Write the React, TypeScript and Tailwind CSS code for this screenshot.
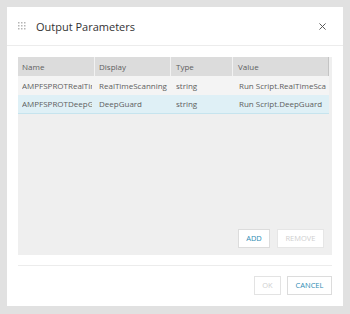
const rows = [
  { name: 'AMPFSPROTRealTimeScanning', display: 'RealTimeScanning', type: 'string', value: 'Run Script.RealTimeScanning', selected: false },
  { name: 'AMPFSPROTDeepGuard', display: 'DeepGuard', type: 'string', value: 'Run Script.DeepGuard', selected: true },
]

function GripIcon() {
  return (
    <svg width="8" height="8" viewBox="0 0 8 8" className="text-[#b5b5b5]">
      {[0, 3, 6].map((y) =>
        [0, 3, 6].map((x) => <rect key={`${x}-${y}`} x={x} y={y} width="1.5" height="1.5" fill="currentColor" />),
      )}
    </svg>
  )
}

export default function App() {
  return (
    <div className="h-[314px] w-[350px] bg-[#e1e1e1] p-[7px] font-['Open_Sans',sans-serif]">
      <div className="flex h-[299px] w-[336px] flex-col bg-white">
        <div className="flex h-[39px] shrink-0 items-center border-b border-[#ececec] pl-[11px] pr-[17px]">
          <GripIcon />
          <span className="ml-[10px] text-[11px] leading-none text-[#333]">Output Parameters</span>
          <svg width="7" height="7" viewBox="0 0 8 8" className="ml-auto">
            <path d="M0.5 0.5L7.5 7.5M7.5 0.5L0.5 7.5" stroke="#555" strokeWidth="1.1" />
          </svg>
        </div>

        <div className="px-[11px] pt-[11px]">
          <div className="flex h-[198px] flex-col bg-[#efefef] pr-[3px] text-[8px] text-[#5e5e5e]">
            <div className="flex h-[19px] bg-[#dcdcdc]">
              <div className="flex w-[77px] items-center border-r border-[#f2f2f2] pl-[4px]">Name</div>
              <div className="flex w-[76px] items-center border-r border-[#f2f2f2] pl-[4px]">Display</div>
              <div className="flex w-[62px] items-center border-r border-[#f2f2f2] pl-[5px]">Type</div>
              <div className="flex w-[96px] items-center border-r border-[#c4c4c4] pl-[5px]">Value</div>
            </div>
            {rows.map((r) => (
              <div
                key={r.name}
                className={
                  r.selected
                    ? 'flex h-[19px] items-center border-b border-[#c6e4ee] bg-[#dff0f6]'
                    : 'flex h-[19px] items-center bg-[#f4f4f4]'
                }
              >
                <div className="w-[77px] pl-[4px] pr-[3px]">
                  <div className="overflow-hidden whitespace-nowrap">{r.name}</div>
                </div>
                <div className="w-[76px] pl-[4px] pr-[3px]">
                  <div className="overflow-hidden whitespace-nowrap">{r.display}</div>
                </div>
                <div className="w-[62px] pl-[5px] pr-[3px]">
                  <div className="overflow-hidden whitespace-nowrap">{r.type}</div>
                </div>
                <div className="w-[96px] pl-[6px] pr-[3px]">
                  <div className="overflow-hidden whitespace-nowrap">{r.value}</div>
                </div>
              </div>
            ))}
            <div className="mt-auto flex justify-end gap-[7px] pb-[7px] pr-[5px]">
              <button className="h-[19px] w-[32px] border border-[#dcdcdc] bg-white text-[7.5px] text-[#2f8db4]">ADD</button>
              <button className="h-[19px] w-[47px] border border-[#e6e6e6] bg-white text-[7.5px] text-[#cfcfcf]">REMOVE</button>
            </div>
          </div>
          <div className="mt-[10px] border-t border-[#ececec]" />
        </div>

        <div className="flex justify-end gap-[6px] px-[11px] pt-[10px]">
          <button className="h-[19px] w-[27px] border border-[#e3e3e3] bg-white text-[7.5px] text-[#cfcfcf]">OK</button>
          <button className="h-[19px] w-[45px] border border-[#dcdcdc] bg-white text-[7.5px] text-[#2f8db4]">CANCEL</button>
        </div>
      </div>
    </div>
  )
}
